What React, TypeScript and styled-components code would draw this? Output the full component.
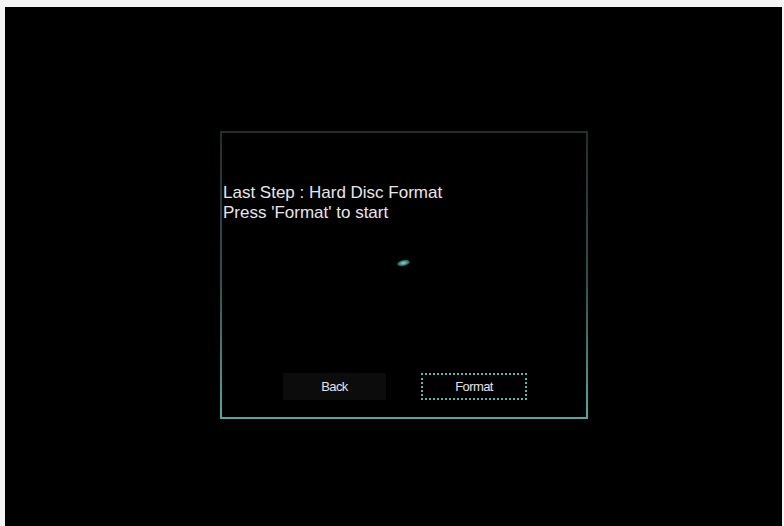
import React from "react";
import styled, { createGlobalStyle } from "styled-components";

const GlobalStyle = createGlobalStyle`
  html, body {
    margin: 0;
    padding: 0;
    background: #ffffff;
  }
  body {
    font-family: "Liberation Sans", Arial, sans-serif;
  }
`;

const Frame = styled.div`
  width: 784px;
  height: 526px;
  padding: 7px 2px 0 5px;
  box-sizing: border-box;
  background: #f4f4f4;
`;

const Screen = styled.div`
  height: 100%;
  background: #000;
  padding: 124px 0 0 215px;
  box-sizing: border-box;
`;

const Panel = styled.div`
  width: 368px;
  height: 288px;
  box-sizing: border-box;
  border: 2px solid transparent;
  border-image: linear-gradient(to bottom, #1c302d 0%, #2c5650 55%, #4fa9a0 100%) 1;
  border-bottom: 2px solid #56b8ae;
  display: flex;
  flex-direction: column;
  padding: 50px 0 17px 1px;
`;

const Message = styled.div`
  color: #e9e6ea;
  font-size: 17px;
  line-height: 20px;
  letter-spacing: 0;
`;

const Middle = styled.div`
  flex: 1;
  display: flex;
  padding: 37px 0 0 174px;
`;

const Blip = styled.div`
  width: 13px;
  height: 6px;
  border-radius: 50%;
  background: radial-gradient(ellipse at center, #8ae0d0 0%, #2d7d74 50%, transparent 100%);
  transform: rotate(-12deg);
`;

const ButtonRow = styled.div`
  display: flex;
  gap: 35px;
  padding-left: 60px;
`;

const Button = styled.div<{ $active?: boolean }>`
  width: ${(p) => (p.$active ? "106px" : "103px")};
  height: 27px;
  box-sizing: border-box;
  display: flex;
  align-items: center;
  justify-content: center;
  color: #e6e2ea;
  font-size: 13px;
  letter-spacing: -0.6px;
  background: ${(p) => (p.$active ? "#000" : "#0c0c0c")};
  border: ${(p) => (p.$active ? "2px dotted #5db6ae" : "2px solid transparent")};
`;

export default function App() {
  return (
    <>
      <GlobalStyle />
      <Frame>
        <Screen>
          <Panel>
            <Message>
              <div>Last Step : Hard Disc Format</div>
              <div>Press 'Format' to start</div>
            </Message>
            <Middle>
              <Blip />
            </Middle>
            <ButtonRow>
              <Button>Back</Button>
              <Button $active>Format</Button>
            </ButtonRow>
          </Panel>
        </Screen>
      </Frame>
    </>
  );
}
